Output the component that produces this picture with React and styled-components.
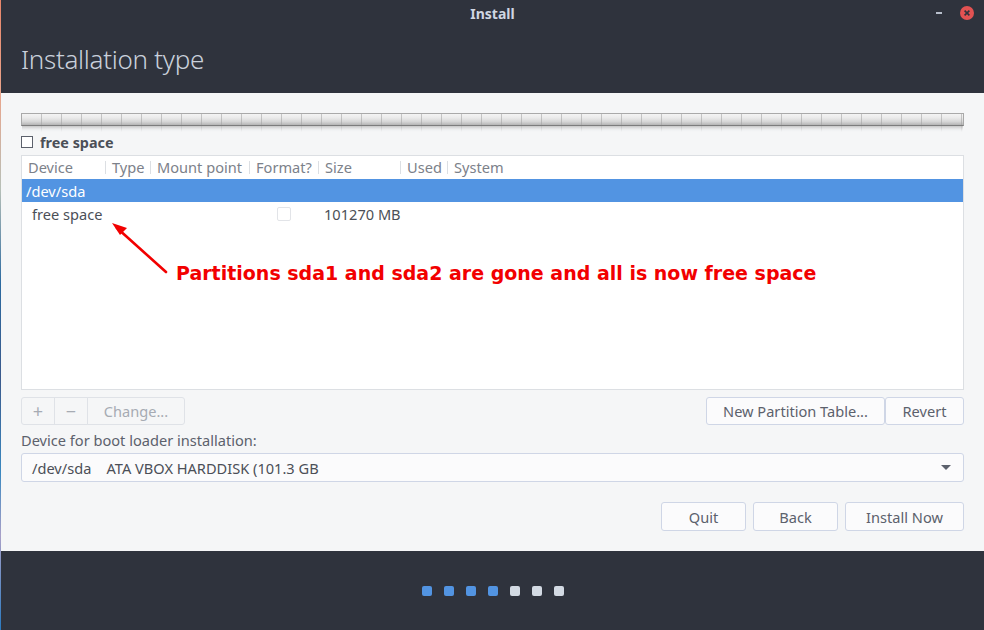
import React from 'react';
import styled, { createGlobalStyle } from 'styled-components';

const GlobalStyle = createGlobalStyle`
  html, body {
    margin: 0;
    padding: 0;
  }
  body {
    width: 984px;
    height: 630px;
    overflow: hidden;
    background: linear-gradient(180deg, #e8866a 0%, #e9a58c 15%, #b7c0b8 30%, #2c6aa0 45%, #3b5a8c 60%, #3a88c0 75%, #a8a0c8 85%, #2a7ac0 100%);
    font-family: 'Noto Sans', 'Open Sans', sans-serif;
  }
`;

const columns = [
  { name: 'Device', width: 83 },
  { name: 'Type', width: 45 },
  { name: 'Mount point', width: 99 },
  { name: 'Format?', width: 69 },
  { name: 'Size', width: 82 },
  { name: 'Used', width: 47 },
  { name: 'System', width: 0 },
];

const gridCols = columns.map(c => (c.width ? `${c.width}px` : '1fr')).join(' ');

function App() {
  return (
    <>
      <GlobalStyle />
      <Window>
        <Header>
          <TitleBar>
            <WindowTitle>Install</WindowTitle>
            <Controls>
              <MinButton />
              <CloseButton>
                <svg width="14" height="14" viewBox="0 0 14 14">
                  <circle cx="7" cy="7" r="7" fill="#e25252" />
                  <path d="M4.6 4.6 L9.4 9.4 M9.4 4.6 L4.6 9.4" stroke="#2f333d" strokeWidth="1.6" />
                </svg>
              </CloseButton>
            </Controls>
          </TitleBar>
          <PageTitle>Installation type</PageTitle>
        </Header>

        <Content>
          <PartitionBar />
          <BarReflection />

          <Legend>
            <CheckBox />
            <LegendText>free space</LegendText>
          </Legend>

          <Table>
            <HeadRow>
              {columns.map((c, i) => (
                <HeadCell key={c.name} first={i === 0}>
                  {c.name}
                </HeadCell>
              ))}
            </HeadRow>
            <DataRow selected>
              <Cell indent={4} selected>/dev/sda</Cell>
            </DataRow>
            <DataRow>
              <Cell indent={10}>free space</Cell>
              <Cell />
              <Cell />
              <CheckCell>
                <SmallCheck />
              </CheckCell>
              <Cell indent={6}>101270 MB</Cell>
              <Cell />
              <Cell />
            </DataRow>

            <Annotation>
              <svg width="70" height="60" viewBox="0 0 70 60">
                <path d="M58 54 L9 10" stroke="#f20000" strokeWidth="2.6" strokeLinecap="round" />
                <path d="M4 5 L19 10 L12 17 Z" fill="#f20000" />
              </svg>
              <AnnotationText>Partitions sda1 and sda2 are gone and all is now free space</AnnotationText>
            </Annotation>
          </Table>

          <ToolRow>
            <ButtonGroup>
              <GroupButton width={34} glyph>+</GroupButton>
              <GroupButton width={34} glyph>−</GroupButton>
              <GroupButton width={98}>Change...</GroupButton>
            </ButtonGroup>
            <ButtonGroup>
              <Button width={179} height={28}>New Partition Table...</Button>
              <Button width={79} height={28}>Revert</Button>
            </ButtonGroup>
          </ToolRow>

          <FieldLabel>Device for boot loader installation:</FieldLabel>
          <Combo>
            <ComboText>/dev/sda&nbsp;&nbsp;&nbsp;&nbsp;ATA VBOX HARDDISK (101.3 GB</ComboText>
            <ComboArrow />
          </Combo>

          <ActionRow>
            <Button width={85}>Quit</Button>
            <Button width={85}>Back</Button>
            <Button width={119}>Install Now</Button>
          </ActionRow>
        </Content>

        <Footer>
          {[1, 1, 1, 1, 0, 0, 0].map((on, i) => (
            <Dot key={i} on={on} />
          ))}
        </Footer>
      </Window>
    </>
  );
}

const Window = styled.div`
  margin-left: 1px;
  width: 983px;
  height: 630px;
  display: flex;
  flex-direction: column;
`;

const Header = styled.div`
  height: 93px;
  background: #2f333d;
  display: flex;
  flex-direction: column;
`;

const TitleBar = styled.div`
  height: 26px;
  display: flex;
  align-items: center;
  justify-content: center;
  position: relative;
`;

const WindowTitle = styled.div`
  color: #cfd6e2;
  font-size: 14px;
  font-weight: 700;
  padding-top: 1px;
`;

const Controls = styled.div`
  position: absolute;
  right: 10px;
  top: 6px;
  display: flex;
  align-items: center;
  gap: 18px;
`;

const MinButton = styled.div`
  width: 6px;
  height: 2px;
  background: #b8bfcc;
`;

const CloseButton = styled.div`
  width: 14px;
  height: 14px;
  display: flex;
`;

const PageTitle = styled.div`
  margin-top: 15px;
  padding-left: 20px;
  color: #c9d0db;
  font-size: 26px;
  font-weight: 300;
  letter-spacing: -0.3px;
`;

const Content = styled.div`
  flex: 1;
  background: #f5f6f7;
  padding: 20px 20px 0 20px;
  display: flex;
  flex-direction: column;
  font-size: 14.6px;
`;

const PartitionBar = styled.div`
  height: 11px;
  border: 1px solid #a9a9a9;
  background:
    repeating-linear-gradient(90deg, transparent 0px, transparent 19px, rgba(160,160,160,0.55) 19px, rgba(160,160,160,0.55) 20px),
    linear-gradient(180deg, #f4f4f4 0%, #eaeaea 35%, #d6d6d6 70%, #b4b4b4 100%);
  border-bottom-color: #7d7d7d;
`;

const BarReflection = styled.div`
  height: 6px;
  margin: 0 1px;
  background:
    repeating-linear-gradient(90deg, transparent 0px, transparent 19px, rgba(180,180,180,0.6) 19px, rgba(180,180,180,0.6) 20px),
    linear-gradient(180deg, #c4c4c4 0%, #f5f6f7 100%);
  -webkit-mask-image: linear-gradient(180deg, rgba(0,0,0,1), rgba(0,0,0,0));
  mask-image: linear-gradient(180deg, rgba(0,0,0,1), rgba(0,0,0,0));
`;

const Legend = styled.div`
  margin-top: 3px;
  height: 14px;
  display: flex;
  align-items: center;
  gap: 7px;
`;

const CheckBox = styled.div`
  width: 10px;
  height: 10px;
  border: 1px solid #5c616c;
  background: #fff;
`;

const LegendText = styled.div`
  font-size: 14.4px;
  font-weight: 700;
  color: #4b4f57;
`;

const Table = styled.div`
  margin-top: 6px;
  height: 233px;
  background: #fff;
  border: 1px solid #dcdfe3;
  position: relative;
`;

const HeadRow = styled.div`
  height: 23px;
  display: grid;
  grid-template-columns: ${gridCols};
  align-items: center;
`;

const HeadCell = styled.div`
  height: 13px;
  line-height: 13px;
  padding-left: 6px;
  color: #7c818a;
  border-left: ${p => (p.first ? 'none' : '1px solid #dcdfe3')};
  white-space: nowrap;
`;

const DataRow = styled.div`
  height: 23px;
  display: grid;
  grid-template-columns: ${gridCols};
  align-items: center;
  background: ${p => (p.selected ? '#5294e2' : 'transparent')};
`;

const Cell = styled.div`
  padding-left: ${p => p.indent || 0}px;
  color: ${p => (p.selected ? '#ffffff' : '#4b4f57')};
  white-space: nowrap;
`;

const CheckCell = styled.div`
  display: flex;
  justify-content: center;
`;

const SmallCheck = styled.div`
  width: 12px;
  height: 12px;
  border: 1px solid #e2e4e8;
  border-radius: 2px;
  background: #fff;
`;

const Annotation = styled.div`
  position: absolute;
  left: 86px;
  top: 62px;
  display: flex;
  align-items: flex-end;
`;

const AnnotationText = styled.div`
  margin-left: -2px;
  margin-bottom: -6px;
  font-family: 'DejaVu Sans', Verdana, sans-serif;
  font-weight: 700;
  font-size: 19px;
  color: #f20000;
  white-space: nowrap;
`;

const ToolRow = styled.div`
  margin-top: 7px;
  display: flex;
  justify-content: space-between;
`;

const ButtonGroup = styled.div`
  display: flex;
`;

const GroupButton = styled.div`
  box-sizing: border-box;
  width: ${p => p.width}px;
  height: 28px;
  display: flex;
  align-items: center;
  justify-content: center;
  border: 1px solid #dfe2e7;
  margin-left: -1px;
  background: #f5f6f7;
  color: #a6abb3;
  font-size: ${p => (p.glyph ? '18px' : 'inherit')};
  &:first-child {
    margin-left: 0;
    border-radius: 3px 0 0 3px;
  }
  &:last-child {
    border-radius: 0 3px 3px 0;
  }
`;

const Button = styled.div`
  box-sizing: border-box;
  width: ${p => p.width}px;
  height: ${p => p.height || 29}px;
  display: flex;
  align-items: center;
  justify-content: center;
  border: 1px solid #cfd6e6;
  border-radius: 3px;
  background: #fbfbfc;
  color: #5c616c;
  white-space: nowrap;
`;

const FieldLabel = styled.div`
  margin-top: 5px;
  height: 20px;
  line-height: 20px;
  color: #5c616c;
`;

const Combo = styled.div`
  margin-top: 3px;
  box-sizing: border-box;
  height: 29px;
  border: 1px solid #cfd6e6;
  border-radius: 3px;
  background: #fbfbfc;
  display: flex;
  align-items: center;
  justify-content: space-between;
  padding: 0 12px 0 10px;
`;

const ComboText = styled.div`
  color: #4b4f57;
`;

const ComboArrow = styled.div`
  width: 0;
  height: 0;
  border-left: 5px solid transparent;
  border-right: 5px solid transparent;
  border-top: 5px solid #5c616c;
`;

const ActionRow = styled.div`
  margin-top: 20px;
  display: flex;
  justify-content: flex-end;
  gap: 7px;
`;

const Footer = styled.div`
  height: 79px;
  background: #2f333d;
  display: flex;
  align-items: center;
  justify-content: center;
  gap: 12px;
`;

const Dot = styled.div`
  width: 10px;
  height: 10px;
  border-radius: 2px;
  background: ${p => (p.on ? '#5294e2' : '#d3dae3')};
`;

export default App;
